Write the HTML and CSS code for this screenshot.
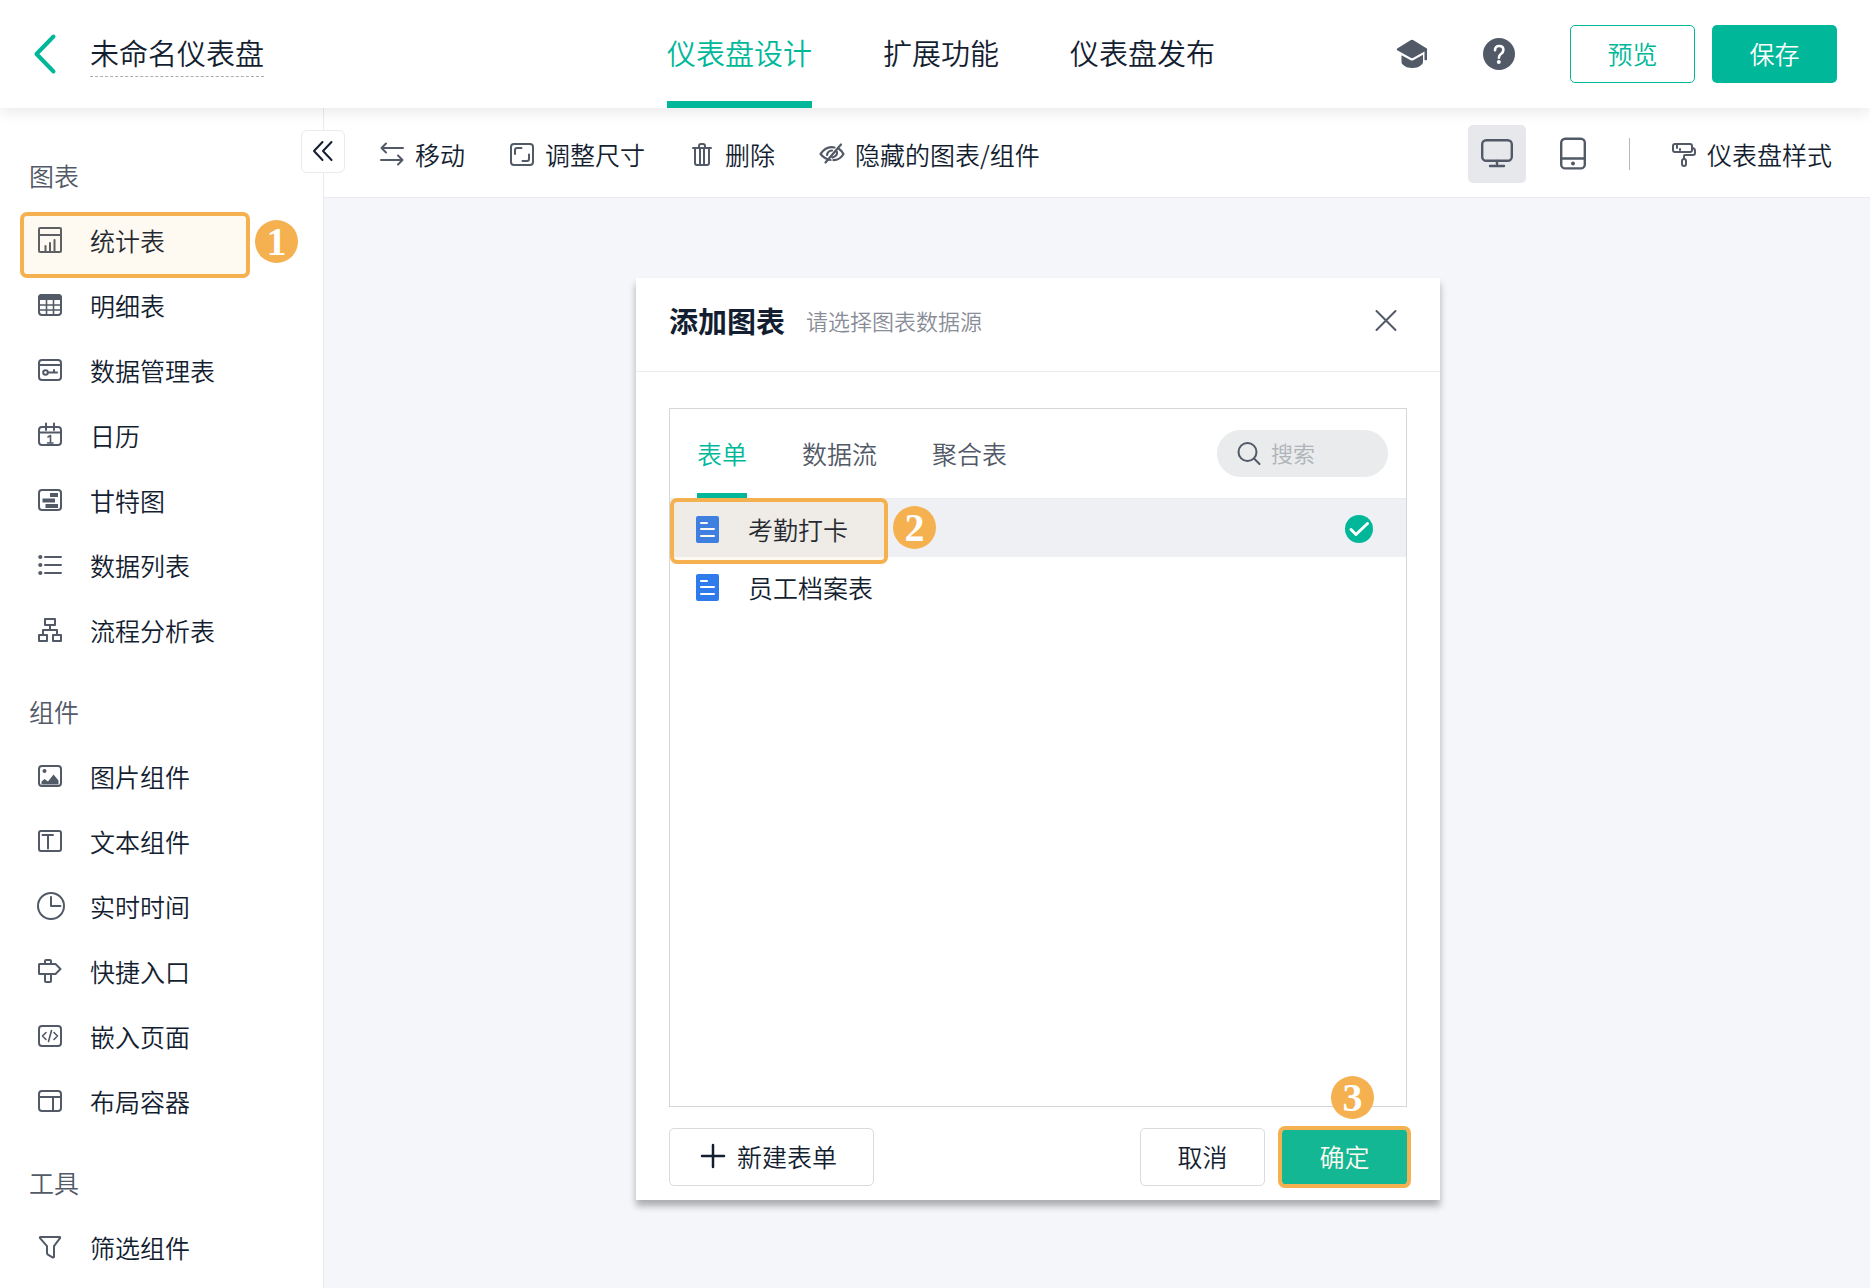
FILE: index.html
```html
<!DOCTYPE html>
<html lang="zh-CN">
<head>
<meta charset="utf-8">
<meta name="viewport" content="width=device-width, initial-scale=1">
<title>未命名仪表盘</title>
<link rel="stylesheet" href="styles.css">
</head>
<body>
<header class="topbar">
  <div class="topbar-start">
    <button class="icon-button" type="button" aria-label="返回">
      <svg class="icon-back" viewBox="0 0 24 40"><path d="M20.500 2.500L3.500 20l17 17.500"/></svg>
    </button>
    <h1 class="board-name">未命名仪表盘</h1>
  </div>
  <nav class="topbar-tabs">
    <a class="topbar-tab is-active" href="#design">仪表盘设计</a>
    <a class="topbar-tab" href="#extend">扩展功能</a>
    <a class="topbar-tab" href="#publish">仪表盘发布</a>
  </nav>
  <div class="topbar-end">
    <button class="icon-button" type="button" aria-label="教程">
      <svg class="icon-large" viewBox="0 0 32 32"><g fill="currentColor"><path d="M14.500 2.200q1.500-.8 3 0l13.300 8.300q1 .8 0 1.700l-13.500 7.600q-1.300.7-2.600 0L1.200 12.200q-1-.9 0-1.700z"/><path d="M5.500 17.200l9.200 5q1.300.7 2.600 0l9.700-5.400v7.200q0 1.500-1.200 2.500-3.500 3.500-9.300 3.500-6.500 0-9.800-3.500-1.200-1-1.200-2.500z"/><path d="M28.500 13l2.500-1.500v10.200q-1.500 1-2.500 0z"/></g></svg>
    </button>
    <button class="icon-button" type="button" aria-label="帮助">
      <svg class="icon-large" viewBox="0 0 32 32"><circle cx="16" cy="16" r="16" fill="currentColor"/><path d="M12 12.200q0-4.200 4.200-4.200t4.200 4q0 2-2.200 3.700-2.300 1.600-2.300 4" fill="none" stroke="#fff" stroke-width="2.600" stroke-linecap="round"/><circle cx="15.800" cy="24" r="2" fill="#fff"/></svg>
    </button>
    <div class="button-group">
      <button class="button button-outline" type="button">预览</button>
      <button class="button button-primary" type="button">保存</button>
    </div>
  </div>
</header>

<div class="workspace">
  <aside class="sidebar">
    <button class="collapse" type="button" aria-label="收起">
      <svg class="icon" viewBox="0 0 24 24"><path d="M11.500 2L3 11l8.500 9M20.500 2L12 11l8.500 9"/></svg>
    </button>
    <section class="group">
      <h2 class="group-title">图表</h2>
      <button class="item" type="button">
        <svg class="icon" viewBox="0 0 24 24"><path d="M2 0h20q1 0 1 1v22q0 1-1 1H2q-1 0-1-1V1q0-1 1-1zM1 7h22M7.500 23v-5M12 23v-8M16.500 23V12"/></svg>统计表
        <span class="highlight highlight-item"></span><span class="badge badge-item">1</span>
      </button>
      <button class="item" type="button">
        <svg class="icon" viewBox="0 0 24 24"><rect x="1" y="2" width="22" height="20" rx="3"/><path d="M1 6V5q0-3 3-3h16q3 0 3 3v1z" fill="currentColor"/><path d="M1 12h22M1 17h22M8.500 7v15M15.500 7v15" stroke-width="1.600"/></svg>明细表
      </button>
      <button class="item" type="button">
        <svg class="icon" viewBox="0 0 24 24"><rect x="1" y="2" width="22" height="20" rx="3"/><path d="M1 7h22M10 14.500h9M16 14.500V12"/><circle cx="7.500" cy="14.500" r="2.300"/></svg>数据管理表
      </button>
      <button class="item" type="button">
        <svg class="icon" viewBox="0 0 24 24"><rect x="1" y="4" width="22" height="18" rx="3"/><path d="M1 9.500h22M8 .5V7M16 .5V7"/><path d="M10 14l2.500-1.500V20M9.500 20h5.500" stroke-width="1.600"/></svg>日历
      </button>
      <button class="item" type="button">
        <svg class="icon" viewBox="0 0 24 24"><rect x="1" y="2" width="22" height="20" rx="3"/><path d="M12 5h8v4h-8zM4.500 10.500H17v4H4.500zM7.500 16H20v4H7.500z" fill="currentColor" stroke="none"/></svg>甘特图
      </button>
      <button class="item" type="button">
        <svg class="icon" viewBox="0 0 24 24"><path d="M7 4h16M7 12h16M7 20h16"/><g fill="currentColor" stroke="none"><circle cx="2.300" cy="4" r="2.100"/><circle cx="2.300" cy="12" r="2.100"/><circle cx="2.300" cy="20" r="2.100"/></g></svg>数据列表
      </button>
      <button class="item" type="button">
        <svg class="icon" viewBox="0 0 24 24"><path d="M7 1h10v6H7zM1 17h8v6H1zM15 17h8v6h-8zM12 7v5M5 17v-5h14v5"/></svg>流程分析表
      </button>
    </section>
    <section class="group">
      <h2 class="group-title">组件</h2>
      <button class="item" type="button">
        <svg class="icon" viewBox="0 0 24 24"><rect x="1" y="2" width="22" height="20" rx="3"/><circle cx="6.500" cy="7" r="2" fill="currentColor" stroke="none"/><path d="M3.500 20.500v-3l3-2.500 3.500 2.500 5.500-7 5 6v4z" fill="currentColor" stroke="none"/></svg>图片组件
      </button>
      <button class="item" type="button">
        <svg class="icon" viewBox="0 0 24 24"><rect x="1" y="2" width="22" height="20" rx="2"/><path d="M4.500 6H15M10 6v13.500"/></svg>文本组件
      </button>
      <button class="item" type="button">
        <svg class="icon icon-clock" viewBox="0 0 28 28"><circle cx="14" cy="14" r="13"/><path d="M14 5v9h9.500"/></svg>实时时间
      </button>
      <button class="item" type="button">
        <svg class="icon" viewBox="0 0 24 24"><path d="M1.500 5h16l5 5-5 5h-16q-.5 0-.5-.5V5.500q0-.5.500-.5zM7 5V2q0-1 1-1h4q1 0 1 1v3M7 15v7q0 1 1 1h4q1 0 1-1v-7"/></svg>快捷入口
      </button>
      <button class="item" type="button">
        <svg class="icon" viewBox="0 0 24 24"><rect x="1" y="2" width="22" height="20" rx="3"/><path d="M8 8.500L4.500 12 8 15.500M16 8.500l3.500 3.500-3.500 3.500M13.500 6.500l-3 11" stroke-width="1.600"/></svg>嵌入页面
      </button>
      <button class="item" type="button">
        <svg class="icon" viewBox="0 0 24 24"><rect x="1" y="2" width="22" height="20" rx="3"/><path d="M1 8h22M15 8v14"/></svg>布局容器
      </button>
    </section>
    <section class="group">
      <h2 class="group-title">工具</h2>
      <button class="item" type="button">
        <svg class="icon" viewBox="0 0 24 24"><path d="M2.500 2h19q1 .2.500 1.200l-6 8V22q-.5.800-1.500.300l-5-3Q9 19 9 18v-6.800L2 3.200Q1.500 2.200 2.500 2z"/></svg>筛选组件
      </button>
    </section>
  </aside>

  <main class="main">
    <div class="toolbar">
      <div class="tools">
        <button class="tool" type="button">
          <svg class="icon" viewBox="0 0 24 24"><path d="M23 6H1.500M6 1.500L1.500 6 6 10.500M1 18h21.500M18 13.500l4.500 4.500-4.500 4.500"/></svg>移动
        </button>
        <button class="tool" type="button">
          <svg class="icon" viewBox="0 0 24 24"><rect x="1" y="2" width="22" height="21" rx="3"/><path d="M5 12V8q0-2 2-2h4.500M12.500 19H17q2 0 2-2v-4.500"/></svg>调整尺寸
        </button>
        <button class="tool" type="button">
          <svg class="icon" viewBox="0 0 24 24"><path d="M3 6h18M5 6v15q0 2 2 2h10q2 0 2-2V6M9 6V4q0-2 2-2h2q2 0 2 2v2M10 6v17M14 6v17"/></svg>删除
        </button>
        <button class="tool" type="button">
          <svg class="icon" viewBox="0 0 24 24"><path d="M10.500 18Q4.500 17 .5 12q6-8.500 14-6.500M18.500 6.500Q21.500 8.500 23.500 12q-3.500 6-10 6.200M21 2.500L5.500 20.500M7 13q.5-4 5-4.500M17 10q.5 4-4.500 5.500" stroke-width="2.200"/></svg>隐藏的图表/组件
        </button>
      </div>
      <div class="view-tools">
        <button class="view-button is-active" type="button" aria-label="电脑端">
          <svg class="icon-large" viewBox="0 0 32 32"><rect x="1.200" y="2.200" width="29.600" height="20.600" rx="4"/><path d="M16 23v4.500M9 28h14"/></svg>
        </button>
        <button class="view-button" type="button" aria-label="移动端">
          <svg class="icon-large" viewBox="0 0 32 32"><rect x="4.200" y=".8" width="23.600" height="29.600" rx="4"/><path d="M4.200 20.500h23.600"/><circle cx="16" cy="25.500" r="2" fill="currentColor" stroke="none"/></svg>
        </button>
        <span class="divider"></span>
        <button class="tool" type="button">
          <svg class="icon" viewBox="0 0 24 24"><rect x="1" y="2" width="19" height="8" rx="2"/><path d="M20 6q3 0 3 3v2q0 2-2 2h-8q-1 0-1 1v3M5 2v4M8 7v1"/><rect x="10" y="17" width="4" height="7" rx="2"/></svg>仪表盘样式
        </button>
      </div>
    </div>

    <div class="canvas">
      <section class="dialog" role="dialog" aria-labelledby="dialog-title">
        <header class="dialog-header">
          <h2 class="dialog-title" id="dialog-title">添加图表</h2>
          <p class="dialog-hint">请选择图表数据源</p>
          <button class="icon-button dialog-close" type="button" aria-label="关闭">
            <svg class="icon" viewBox="0 0 24 24"><path d="M2.500 3l19 19M21.500 3l-19 19"/></svg>
          </button>
        </header>
        <div class="dialog-body">
          <div class="picker">
            <div class="picker-header">
              <nav class="picker-tabs">
                <a class="picker-tab is-active" href="#form">表单</a>
                <a class="picker-tab" href="#flow">数据流</a>
                <a class="picker-tab" href="#aggregate">聚合表</a>
              </nav>
              <label class="search">
                <svg class="icon" viewBox="0 0 24 24"><circle cx="10.500" cy="10" r="9"/><path d="M17 16.500l5.500 5.500"/></svg>
                <input class="search-input" type="text" placeholder="搜索" aria-label="搜索">
              </label>
            </div>
            <button class="source is-selected" type="button">
              <svg class="icon-file" viewBox="0 0 23 28"><rect y="1" width="23" height="27" rx="2"/><path d="M5 8h6M5 14h13M5 21h13"/></svg>考勤打卡
              <svg class="icon-check" viewBox="0 0 28 28"><circle cx="14" cy="14" r="14"/><path d="M6 14.500l5 5L22.500 8.500"/></svg>
              <span class="highlight highlight-source"></span><span class="badge badge-source">2</span>
            </button>
            <button class="source" type="button">
              <svg class="icon-file" viewBox="0 0 23 28"><rect y="1" width="23" height="27" rx="2"/><path d="M5 8h6M5 14h13M5 21h13"/></svg>员工档案表
            </button>
          </div>
          <div class="dialog-footer">
            <button class="button button-plain button-new" type="button">
              <svg class="icon" viewBox="0 0 24 24"><path d="M12 1v22M1 12h22" stroke-width="2.500"/></svg>新建表单
            </button>
            <div class="button-group">
              <button class="button button-plain" type="button">取消</button>
              <div class="confirm">
                <button class="button button-primary" type="button">确定</button>
                <span class="highlight highlight-confirm"></span><span class="badge badge-confirm">3</span>
              </div>
            </div>
          </div>
        </div>
      </section>
    </div>
  </main>
</div>
</body>
</html>
```
FILE: styles.css
```css
:root {
  --ink: #141e31;
  --muted: #525967;
  --hint: #898d98;
  --green: #00b899;
  --line: #e9ebed;
  --mark: #f5b04f;
}

* {
  box-sizing: border-box;
}

body {
  margin: 0;
  min-height: 100vh;
  display: flex;
  flex-direction: column;
  background: #fff;
  color: var(--ink);
  font: 350 25px/36px "Noto Sans CJK SC", sans-serif;
}

button,
input {
  font: inherit;
  color: inherit;
  background: none;
  border: 0;
  padding: 0;
}

h1,
h2,
p {
  margin: 0;
  font-weight: inherit;
}

a {
  color: inherit;
  text-decoration: none;
}

svg {
  display: block;
  flex: none;
  overflow: visible;
  fill: none;
  stroke: currentColor;
  stroke-width: 2;
  stroke-linejoin: round;
  stroke-linecap: round;
}

.icon {
  width: 24px;
  height: 24px;
  color: var(--muted);
}

.icon-large {
  width: 32px;
  height: 32px;
  color: var(--muted);
  stroke-width: 2.4;
}

.topbar .icon-large {
  stroke: none;
}

.icon-button {
  display: flex;
}

/* Top bar */
.topbar {
  position: relative;
  z-index: 2;
  display: grid;
  grid-template-columns: 1fr auto 1fr;
  height: 108px;
  padding: 0 33px;
  background: #fff;
  box-shadow: 0 4px 14px rgba(0, 0, 0, 0.09);
  font-size: 29px;
}

.topbar-start {
  display: flex;
  align-items: center;
  gap: 33px;
}

.icon-back {
  width: 24px;
  height: 40px;
  color: var(--green);
  stroke-width: 4;
}

.board-name {
  padding-bottom: 3px;
  border-bottom: 1px dashed #a9adb3;
  font-size: 29px;
  line-height: 41px;
}

.topbar-tabs {
  display: flex;
  gap: 71px;
  margin-left: 12px;
}

.topbar-tab {
  line-height: 104px;
}

.topbar-tab.is-active {
  color: var(--green);
  box-shadow: inset 0 -7px var(--green);
  height: 108px;
}

.topbar-end {
  display: flex;
  align-items: center;
  justify-content: flex-end;
  gap: 55px;
}

.button-group {
  display: flex;
  gap: 17px;
}

.button {
  min-width: 125px;
  height: 58px;
  padding-bottom: 2px;
  border: 1px solid transparent;
  border-radius: 5px;
  font-size: 25px;
}

.button-outline {
  border-color: var(--green);
  color: var(--green);
}

.button-primary {
  background: var(--green);
  color: #fff;
}

.button-plain {
  border-color: #d9dbdf;
}

/* Sidebar */
.workspace {
  flex: 1;
  display: flex;
}

.sidebar {
  position: relative;
  flex: none;
  width: 324px;
  padding-top: 35px;
  border-right: 1px solid var(--line);
}

.collapse {
  position: absolute;
  z-index: 1;
  top: 22px;
  right: -22px;
  display: grid;
  place-items: center;
  width: 44px;
  height: 43px;
  border: 1px solid var(--line);
  border-radius: 6px;
  background: #fff;
}

.collapse .icon {
  color: var(--ink);
}

.group + .group {
  margin-top: 16px;
}

.group-title {
  padding-left: 29px;
  color: var(--muted);
  font-size: 25px;
  line-height: 65px;
}

.item {
  position: relative;
  display: flex;
  align-items: center;
  gap: 28px;
  width: 100%;
  height: 65px;
  padding: 0 0 2px 38px;
  text-align: left;
}

.icon-clock {
  width: 28px;
  height: 28px;
  margin: 0 -3px 0 -1px;
}

/* Step markers */
.highlight {
  position: absolute;
  border: 4px solid var(--mark);
  border-radius: 7px;
  background: rgba(245, 176, 79, 0.08);
  pointer-events: none;
}

.highlight-item {
  top: 4px;
  left: 20px;
  width: 230px;
  height: 66px;
}

.highlight-source {
  top: -1px;
  left: 0;
  width: 218px;
  height: 66px;
}

.highlight-confirm {
  inset: -2px -4px;
}

.badge {
  position: absolute;
  width: 43px;
  height: 43px;
  border-radius: 50%;
  background: var(--mark);
  color: #fff;
  font: 700 40px/43px "Liberation Serif", serif;
  text-align: center;
}

.badge-item {
  top: 12px;
  left: 255px;
}

.badge-source {
  top: 7px;
  left: 223px;
}

.badge-confirm {
  top: -52px;
  right: 33px;
}

/* Toolbar */
.main {
  flex: 1;
  min-width: 0;
  display: flex;
  flex-direction: column;
}

.toolbar {
  display: flex;
  align-items: center;
  justify-content: space-between;
  height: 90px;
  padding: 3px 38px 0 56px;
  border-bottom: 1px solid var(--line);
}

.tools,
.view-tools {
  display: flex;
  align-items: center;
}

.tools {
  gap: 45px;
}

.tool {
  display: flex;
  align-items: center;
  gap: 11px;
  white-space: nowrap;
}

.view-tools {
  gap: 18px;
}

.view-button {
  display: grid;
  place-items: center;
  width: 58px;
  height: 58px;
  border-radius: 5px;
}

.view-button.is-active {
  background: #e6e8ec;
}

.divider {
  width: 1px;
  height: 32px;
  margin: 0 24px 0 9px;
  background: #b3b6bb;
}

/* Canvas and dialog */
.canvas {
  flex: 1;
  display: flex;
  padding: 80px 48px 88px 312px;
  background: #f4f6fa;
}

.dialog {
  display: flex;
  flex-direction: column;
  width: 100%;
  max-width: 804px;
  background: #fff;
  box-shadow: 0 6px 7px rgba(0, 0, 0, 0.3);
}

.dialog-header {
  display: flex;
  align-items: center;
  gap: 21px;
  height: 94px;
  padding: 0 42px 9px 33px;
  border-bottom: 1px solid var(--line);
}

.dialog-title {
  font-size: 29px;
  font-weight: 700;
}

.dialog-hint {
  color: var(--hint);
  font-size: 22px;
}

.dialog-close {
  margin-left: auto;
}

.dialog-body {
  flex: 1;
  display: flex;
  flex-direction: column;
  gap: 21px;
  padding: 36px 33px 14px;
}

.picker {
  flex: 1;
  border: 1px solid #d5d6da;
}

.picker-header {
  display: flex;
  align-items: center;
  justify-content: space-between;
  height: 90px;
  padding: 0 18px 0 27px;
  border-bottom: 1px solid var(--line);
}

.picker-tabs {
  display: flex;
  gap: 55px;
  color: var(--muted);
}

.picker-tab {
  height: 89px;
  line-height: 88px;
}

.picker-tab.is-active {
  color: var(--green);
  box-shadow: inset 0 -5px var(--green);
}

.search {
  display: flex;
  align-items: center;
  gap: 10px;
  width: 171px;
  height: 47px;
  padding: 0 20px;
  border-radius: 24px;
  background: #e9ebec;
}

.search-input {
  flex: 1;
  min-width: 0;
  padding-bottom: 3px;
  font-size: 22px;
}

.search-input::placeholder {
  color: #b0b3b9;
}

.source {
  position: relative;
  display: flex;
  align-items: center;
  gap: 29px;
  width: 100%;
  height: 58px;
  padding: 2px 33px 0 26px;
}

.source.is-selected {
  background: #eff0f4;
}

.icon-file {
  width: 23px;
  height: 28px;
  color: #fff;
}

.icon-file rect {
  fill: #2f7bec;
  stroke: none;
}

.icon-check {
  width: 28px;
  height: 28px;
  margin-left: auto;
  stroke: #fff;
  stroke-width: 3;
}

.icon-check circle {
  fill: var(--green);
  stroke: none;
}

.dialog-footer {
  display: flex;
  justify-content: space-between;
}

.button-new {
  display: flex;
  align-items: center;
  gap: 12px;
  padding: 0 36px 2px 31px;
}

.button-new .icon {
  color: var(--ink);
}

.confirm {
  position: relative;
}
```
